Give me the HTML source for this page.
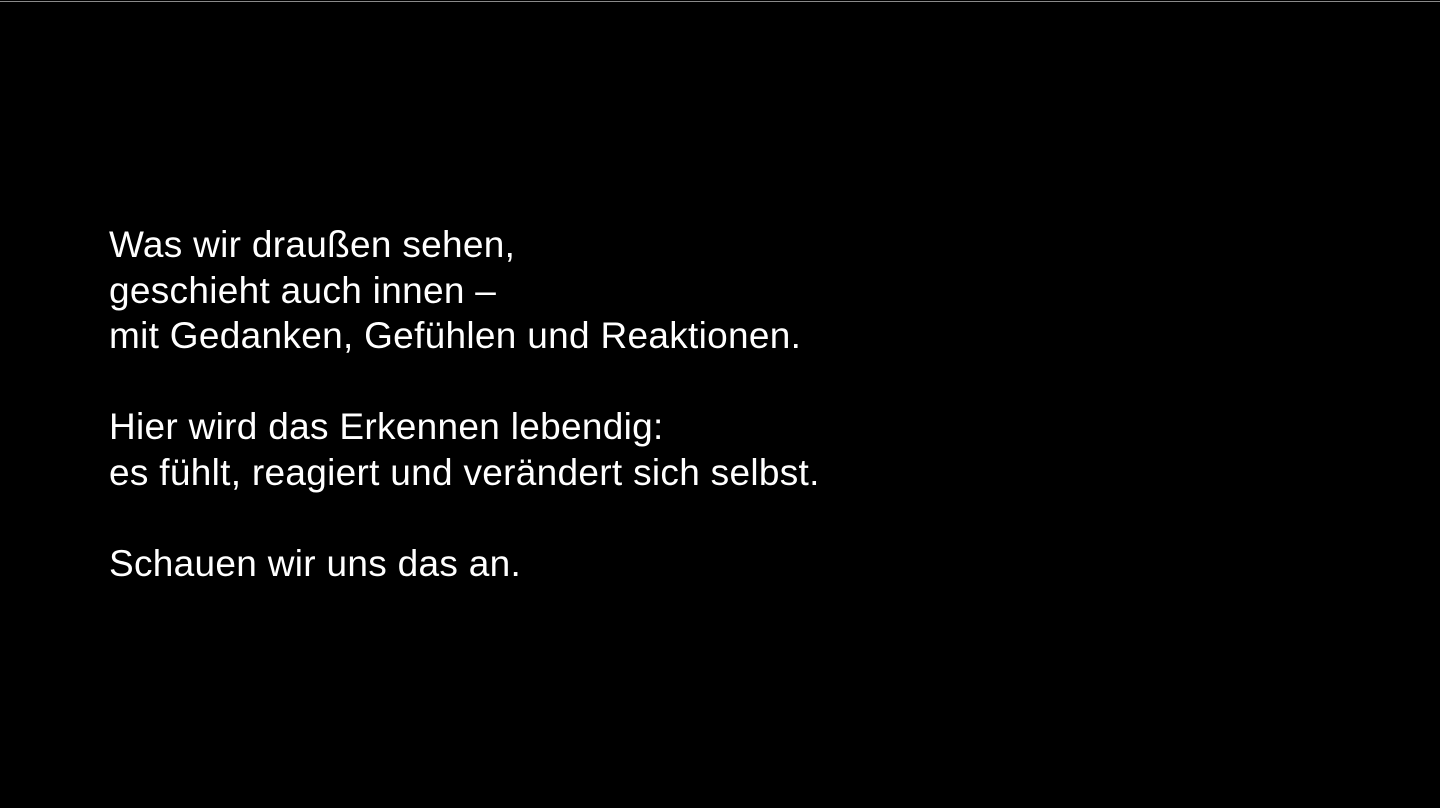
<!DOCTYPE html>
<html><head><meta charset="utf-8"><style>
html,body{margin:0;padding:0;background:#000;width:1440px;height:808px;overflow:hidden}
.line{position:absolute;left:0;top:1px;width:1440px;height:1px;background:#8a8a8a}
.t{position:absolute;left:109px;top:222px;color:#fff;font-family:"Liberation Sans",sans-serif;font-size:37px;line-height:45.5px;letter-spacing:0.3px;white-space:pre}
</style></head><body>
<div class="line"></div>
<div class="t">Was wir draußen sehen,
geschieht auch innen –
mit Gedanken, Gefühlen und Reaktionen.

Hier wird das Erkennen lebendig:
es fühlt, reagiert und verändert sich selbst.

Schauen wir uns das an.</div>
</body></html>
